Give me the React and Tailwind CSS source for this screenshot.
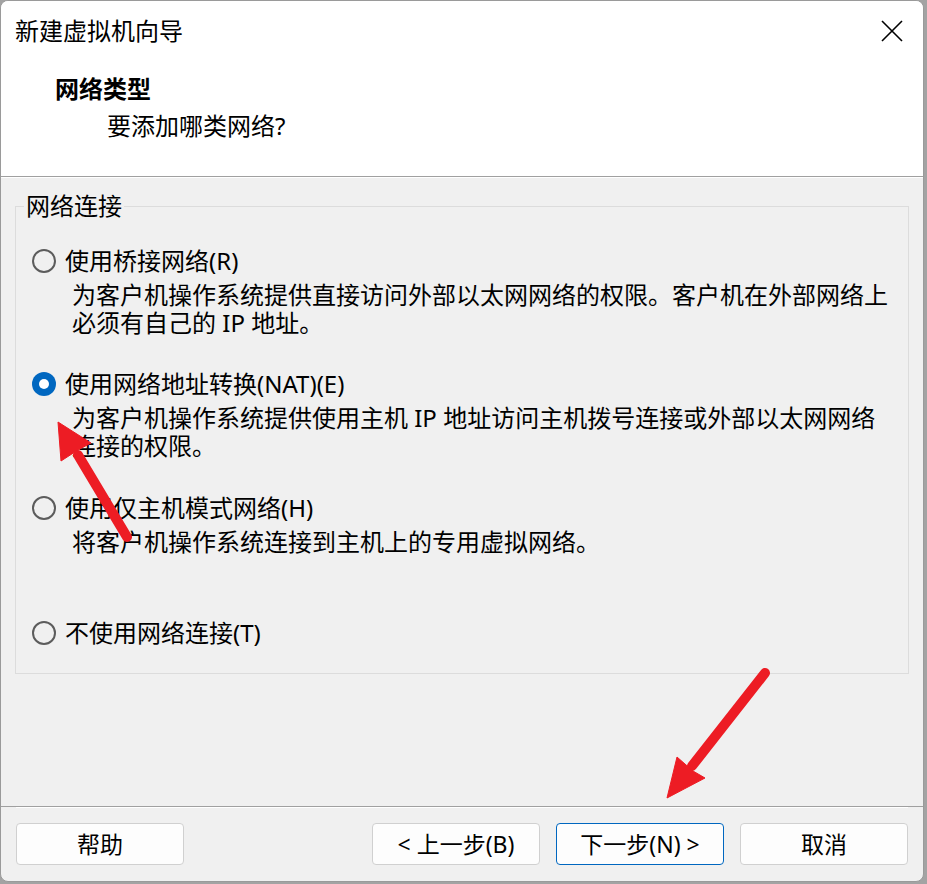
import React from "react";

const font = { fontFamily: '"Noto Sans", "Noto Sans CJK SC", sans-serif' };

function Radio({ checked }) {
  if (checked) {
    return (
      <span className="flex h-[24px] w-[24px] shrink-0 items-center justify-center rounded-full bg-[#0067c0]">
        <span className="h-[10px] w-[10px] rounded-full bg-white" />
      </span>
    );
  }
  return <span className="h-[24px] w-[24px] shrink-0 rounded-full border-[2px] border-[#5c5c5c] bg-[#f0f0f0]" />;
}

function Option({ checked, label, lines, className }) {
  return (
    <div className={className}>
      <div className="flex items-center gap-[9px] pl-[16px] leading-[28px]">
        <Radio checked={checked} />
        <span className="whitespace-nowrap">{label}</span>
      </div>
      {lines.length > 0 && (
        <div className="mt-[6px]">
          {lines.map((l, i) => (
            <div key={i} className="whitespace-nowrap pl-[56px] leading-[28px]">
              {l}
            </div>
          ))}
        </div>
      )}
    </div>
  );
}

function Btn({ children, primary }) {
  return (
    <div
      className={`flex h-[42px] w-[168px] items-center justify-center rounded-[4px] border bg-[#fdfdfd] text-[23px] leading-[28px] text-black ${
        primary ? "border-[#0067c0]" : "border-[#d0d0d0]"
      }`}
    >
      {children}
    </div>
  );
}

export default function App() {
  return (
    <div className="relative h-[884px] w-[927px] overflow-hidden bg-[#a3a3a3]" style={font}>
      <div className="flex h-[882px] w-[924px] flex-col overflow-hidden rounded-[8px] border border-[#9a9a9a] bg-[#f0f0f0] text-[24px] text-black">
        <div className="flex h-[176px] shrink-0 flex-col border-b border-[#a0a0a0] bg-white">
          <div className="flex items-center justify-between pl-[14px] pr-[20px] pt-[16px] leading-[28px]">
            <span>新建虚拟机向导</span>
            <svg width="22" height="22" viewBox="0 0 22 22">
              <path d="M1 1 L21 21 M21 1 L1 21" stroke="#000" strokeWidth="1.6" fill="none" />
            </svg>
          </div>
          <div className="mt-[30px] pl-[54px] font-bold leading-[28px]">网络类型</div>
          <div className="mt-[9px] pl-[106px] leading-[28px]">要添加哪类网络?</div>
        </div>
        <div className="flex-1 border-t border-white">
          <fieldset className="mx-[14px] mt-[14px] border border-[#dcdcdc] px-0 pb-[26px] pt-0">
            <legend className="ml-[8px] px-[2px] leading-[28px]">网络连接</legend>
            <Option
              className="pt-[27px]"
              label="使用桥接网络(R)"
              lines={["为客户机操作系统提供直接访问外部以太网网络的权限。客户机在外部网络上", "必须有自己的 IP 地址。"]}
            />
            <Option
              className="pt-[33px]"
              checked
              label="使用网络地址转换(NAT)(E)"
              lines={["为客户机操作系统提供使用主机 IP 地址访问主机拨号连接或外部以太网网络", "连接的权限。"]}
            />
            <Option className="pt-[34px]" label="使用仅主机模式网络(H)" lines={["将客户机操作系统连接到主机上的专用虚拟网络。"]} />
            <Option className="pt-[63px]" label="不使用网络连接(T)" lines={[]} />
          </fieldset>
        </div>
        <div className="flex h-[75px] shrink-0 items-start justify-between border-t border-[#a0a0a0] px-[15px] pt-[0px]">
          <div className="flex w-full items-start justify-between border-t border-white pt-[15px]">
            <Btn>帮助</Btn>
            <div className="flex gap-[16px]">
              <Btn>&lt; 上一步(B)</Btn>
              <Btn primary>下一步(N) &gt;</Btn>
              <Btn>取消</Btn>
            </div>
          </div>
        </div>
      </div>
      <svg className="pointer-events-none absolute left-0 top-0" width="927" height="884" viewBox="0 0 927 884">
        <g fill="#ed1c24" stroke="#ed1c24">
          <line x1="127" y1="537" x2="78" y2="455" strokeWidth="10" strokeLinecap="round" />
          <polygon points="58,422 61,461 78,450 91,443" strokeWidth="1" strokeLinejoin="round" />
          <line x1="765" y1="673" x2="692" y2="766" strokeWidth="10" strokeLinecap="round" />
          <polygon points="667,798 677,757 693,771 705,778" strokeWidth="1" strokeLinejoin="round" />
        </g>
      </svg>
    </div>
  );
}
